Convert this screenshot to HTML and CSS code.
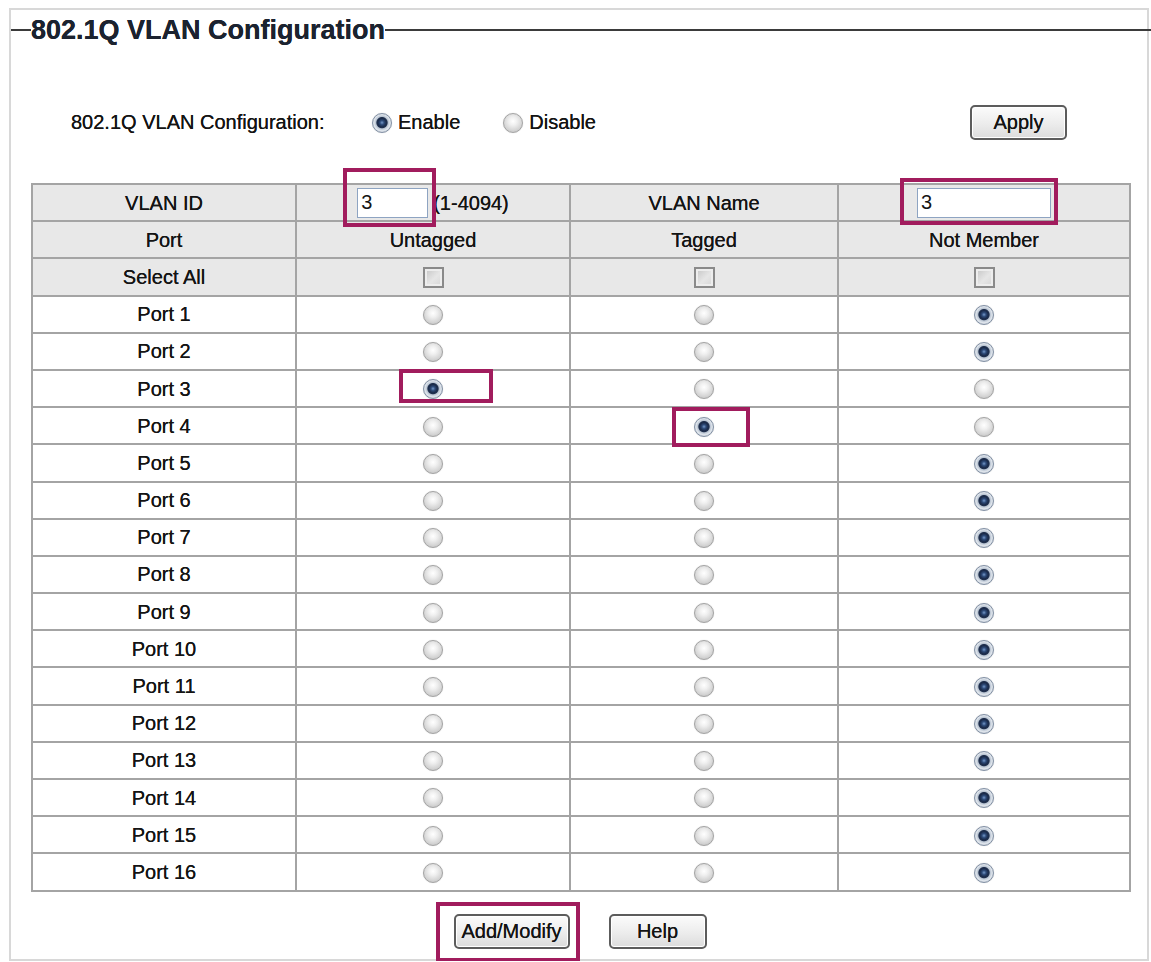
FILE: index.html
```html
<!DOCTYPE html>
<html>
<head>
<meta charset="utf-8">
<title>802.1Q VLAN Configuration</title>
<link rel="stylesheet" href="styles.css">
</head>
<body>
<div class="frame">
  <div class="legend">
    <span class="stub"></span>
    <span class="title">802.1Q VLAN Configuration</span>
    <span class="rule"></span>
  </div>

  <div class="config">
    <span class="cfg-label">802.1Q VLAN Configuration:</span>
    <span class="opt"><span class="radio big on"></span>Enable</span>
    <span class="opt"><span class="radio big"></span>Disable</span>
    <button class="btn apply">Apply</button>
  </div>

  <table class="vlan">
    <colgroup>
      <col class="c1"><col class="c2"><col class="c3"><col class="c4">
    </colgroup>
    <tr class="head">
      <td>VLAN ID</td>
      <td><div class="idcell"><span class="mark"><input class="field fid" type="text" value="3"><span class="hl hl-id"></span></span><span>(1-4094)</span></div></td>
      <td>VLAN Name</td>
      <td><span class="mark"><input class="field fname" type="text" value="3"><span class="hl hl-name"></span></span></td>
    </tr>
    <tr class="head">
      <td>Port</td><td>Untagged</td><td>Tagged</td><td>Not Member</td>
    </tr>
    <tr class="head">
      <td>Select All</td>
      <td><span class="check"></span></td>
      <td><span class="check"></span></td>
      <td><span class="check"></span></td>
    </tr>
    <tr><td>Port 1</td><td><span class="radio"></span></td><td><span class="radio"></span></td><td><span class="radio on"></span></td></tr>
    <tr><td>Port 2</td><td><span class="radio"></span></td><td><span class="radio"></span></td><td><span class="radio on"></span></td></tr>
    <tr><td>Port 3</td><td><span class="mark"><span class="radio on"></span><span class="hl hl-p3"></span></span></td><td><span class="radio"></span></td><td><span class="radio"></span></td></tr>
    <tr><td>Port 4</td><td><span class="radio"></span></td><td><span class="mark"><span class="radio on"></span><span class="hl hl-p4"></span></span></td><td><span class="radio"></span></td></tr>
    <tr><td>Port 5</td><td><span class="radio"></span></td><td><span class="radio"></span></td><td><span class="radio on"></span></td></tr>
    <tr><td>Port 6</td><td><span class="radio"></span></td><td><span class="radio"></span></td><td><span class="radio on"></span></td></tr>
    <tr><td>Port 7</td><td><span class="radio"></span></td><td><span class="radio"></span></td><td><span class="radio on"></span></td></tr>
    <tr><td>Port 8</td><td><span class="radio"></span></td><td><span class="radio"></span></td><td><span class="radio on"></span></td></tr>
    <tr><td>Port 9</td><td><span class="radio"></span></td><td><span class="radio"></span></td><td><span class="radio on"></span></td></tr>
    <tr><td>Port 10</td><td><span class="radio"></span></td><td><span class="radio"></span></td><td><span class="radio on"></span></td></tr>
    <tr><td>Port 11</td><td><span class="radio"></span></td><td><span class="radio"></span></td><td><span class="radio on"></span></td></tr>
    <tr><td>Port 12</td><td><span class="radio"></span></td><td><span class="radio"></span></td><td><span class="radio on"></span></td></tr>
    <tr><td>Port 13</td><td><span class="radio"></span></td><td><span class="radio"></span></td><td><span class="radio on"></span></td></tr>
    <tr><td>Port 14</td><td><span class="radio"></span></td><td><span class="radio"></span></td><td><span class="radio on"></span></td></tr>
    <tr><td>Port 15</td><td><span class="radio"></span></td><td><span class="radio"></span></td><td><span class="radio on"></span></td></tr>
    <tr><td>Port 16</td><td><span class="radio"></span></td><td><span class="radio"></span></td><td><span class="radio on"></span></td></tr>
  </table>

  <div class="actions">
    <span class="mark"><button class="btn add">Add/Modify</button><span class="hl hl-add"></span></span>
    <button class="btn help">Help</button>
  </div>
</div>
</body>
</html>
```

FILE: styles.css
```css
html, body {
  margin: 0;
  padding: 0;
  background: #ffffff;
}

body {
  font-family: "Liberation Sans", Arial, sans-serif;
  font-size: 20px;
  color: #141414;
  text-shadow: 0 0 0.4px #141414;
}

.frame {
  margin: 8px 2px 0 9px;
  height: 953px;
  border: 2px solid #d8d8d8;
  box-sizing: border-box;
}

/* fieldset-like legend */
.legend {
  display: flex;
  align-items: center;
  height: 40px;
  margin-right: -4px;
}

.stub {
  width: 20px;
  height: 2px;
  background: #3b3b3b;
}

.title {
  font-weight: bold;
  font-size: 27px;
  color: #1b2330;
  line-height: 1;
}

.rule {
  flex: 1;
  height: 2px;
  background: #3b3b3b;
}

/* enable / disable row */
.config {
  display: flex;
  align-items: center;
  height: 35px;
  margin-top: 55px;
  padding-left: 60px;
}

.cfg-label {
  width: 301px;
}

.opt {
  display: flex;
  align-items: center;
  gap: 6px;
}

.opt + .opt {
  margin-left: 43px;
}

/* buttons */
.btn {
  font-family: "Liberation Sans", Arial, sans-serif;
  font-size: 20px;
  color: #141414;
  text-shadow: 0 0 0.4px #141414;
  height: 35px;
  padding: 0;
  border: 2px solid #5c5c5c;
  border-radius: 5px;
  background: linear-gradient(#fbfbfb, #ececec 55%, #dcdcdc);
  box-shadow: inset 0 0 0 1px #ffffff;
}

.apply {
  margin-left: auto;
  margin-right: 80px;
  width: 97px;
}

.add {
  width: 116px;
  display: block;
}

.help {
  width: 98px;
}

/* table */
.vlan {
  margin: 43px 0 0 20px;
  width: 1098px;
  table-layout: fixed;
  border-collapse: collapse;
}

.c1 { width: 264px; }
.c2 { width: 274px; }
.c3 { width: 268px; }
.c4 { width: 292px; }

.vlan td {
  height: 35.2px;
  padding: 0;
  border: 2px solid #a4a4a4;
  text-align: center;
  vertical-align: middle;
  line-height: 1;
}

.vlan tr.head td {
  background: #e8e8e8;
}

.idcell {
  display: flex;
  justify-content: center;
  align-items: center;
  gap: 5px;
}

/* inputs */
.field {
  box-sizing: border-box;
  height: 30px;
  margin: 0;
  padding: 0 3px;
  border: 1px solid #8ea4c2;
  background: #ffffff;
  font-family: "Liberation Sans", Arial, sans-serif;
  font-size: 20px;
  color: #141414;
  vertical-align: middle;
}

.fid { width: 71px; }
.fname { width: 134px; }

/* radios */
.radio {
  display: inline-block;
  box-sizing: border-box;
  width: 20px;
  height: 20px;
  border-radius: 50%;
  border: 1px solid #a4a4a4;
  background: radial-gradient(circle at 50% 40%, #ffffff 0, #efefef 30%, #d2d2d2 68%, #b8b8b8 100%);
  box-shadow: 0 0 1px #c8c8c8;
  vertical-align: middle;
}

.radio.on {
  border-color: #8290a4;
  background: radial-gradient(circle at 50% 48%, #7598c8 0, #2d4a78 16%, #1b2b4a 32%, #22324f 40%, #b8c3d1 47%, #dfe5ec 62%, #a7b2c1 100%);
}

/* checkboxes */
.check {
  display: inline-block;
  box-sizing: border-box;
  width: 21px;
  height: 21px;
  border: 2px solid #8a8a8a;
  background: linear-gradient(135deg, #c4c4c4, #e6e6e6 55%, #d6d6d6);
  box-shadow: inset 0 0 0 2px #ededed;
  vertical-align: middle;
}

/* red annotation boxes */
.mark {
  position: relative;
  display: inline-block;
  vertical-align: middle;
  line-height: 0;
}

.hl {
  position: absolute;
  border: 4px solid #a11c5d;
  pointer-events: none;
}

.hl-id   { left: -14px; right: -8px;  top: -20px; bottom: -9px; }
.hl-name { left: -17px; right: -7px;  top: -10px; bottom: -7px; }
.hl-p3   { left: -24px; right: -50px; top: -10px; bottom: -4px; }
.hl-p4   { left: -22px; right: -36px; top: -10px; bottom: -10px; }
.hl-add  { left: -18px; right: -10px; top: -12px; bottom: -13px; }

/* bottom buttons */
.actions {
  display: flex;
  justify-content: center;
  align-items: center;
  gap: 39px;
  width: 1098px;
  margin: 22px 0 0 20px;
}
```
